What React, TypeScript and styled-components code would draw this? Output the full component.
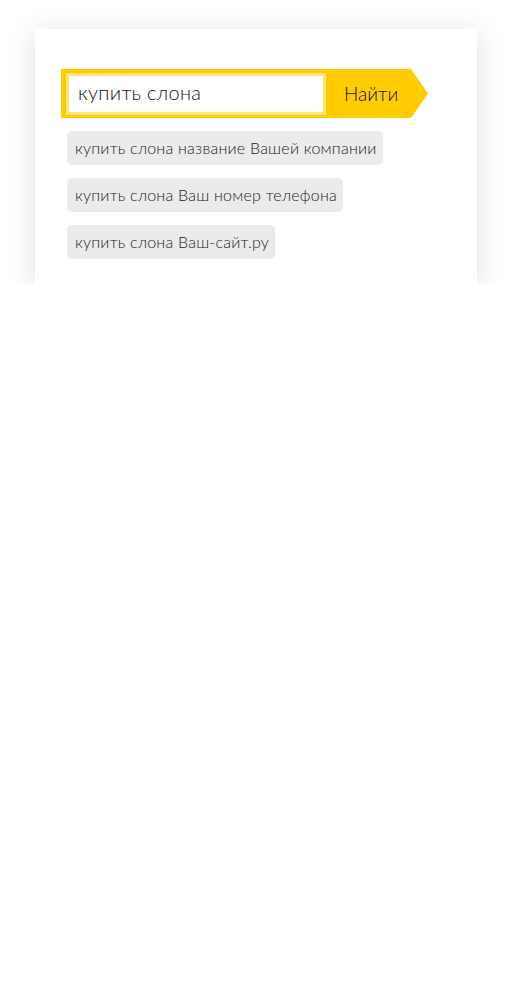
import React from "react";
import styled, { createGlobalStyle } from "styled-components";

const Global = createGlobalStyle`
  html, body { margin: 0; padding: 0; background: #fff; }
  body { font-family: Lato, "Noto Sans", sans-serif; }
`;

const Page = styled.div`
  padding: 29px 0 0 35px;
`;

const Card = styled.div`
  width: 442px;
  box-sizing: border-box;
  background: #fff;
  padding: 40px 26px 25px;
  box-shadow: 0 4px 28px rgba(0, 0, 0, 0.13);
`;

const SearchBar = styled.form`
  display: flex;
  align-items: stretch;
  width: 367px;
  height: 49px;
  box-sizing: border-box;
  padding: 4px 0 3px 5px;
  background: #ffcc00;
  clip-path: polygon(0 0, 350px 0, 100% 50%, 350px 100%, 0 100%);
  margin: 0;
`;

const Input = styled.input`
  width: 260px;
  height: 42px;
  box-sizing: border-box;
  border: 3px solid #ffe47a;
  background: #fff;
  padding: 0 9px 5px;
  font-family: Lato, "Noto Sans", sans-serif;
  font-weight: 300;
  font-size: 20px;
  letter-spacing: 0.3px;
  color: #111;
  outline: none;
`;

const Button = styled.button`
  flex: 1;
  border: 0;
  background: transparent;
  text-align: left;
  padding: 0 0 2px 18px;
  font-family: Lato, "Noto Sans", sans-serif;
  font-weight: 300;
  font-size: 19px;
  color: #111;
  cursor: pointer;
`;

const Suggestions = styled.div`
  display: flex;
  flex-direction: column;
  align-items: flex-start;
  gap: 13px;
  margin-top: 13px;
  padding-left: 6px;
`;

const Chip = styled.span`
  display: inline-block;
  height: 34px;
  line-height: 34px;
  padding: 0 6px 0 8px;
  border-radius: 5px;
  background: #ebebeb;
  font-size: 16px;
  font-weight: 300;
  letter-spacing: 0.22px;
  color: #22222e;
`;

const items = [
  "купить слона название Вашей компании",
  "купить слона Ваш номер телефона",
  "купить слона Ваш-сайт.ру",
];

export default function App() {
  return (
    <>
      <Global />
      <Page>
        <Card>
          <SearchBar onSubmit={(e) => e.preventDefault()}>
            <Input defaultValue="купить слона" />
            <Button type="submit">Найти</Button>
          </SearchBar>
          <Suggestions>
            {items.map((t) => (
              <Chip key={t}>{t}</Chip>
            ))}
          </Suggestions>
        </Card>
      </Page>
    </>
  );
}
